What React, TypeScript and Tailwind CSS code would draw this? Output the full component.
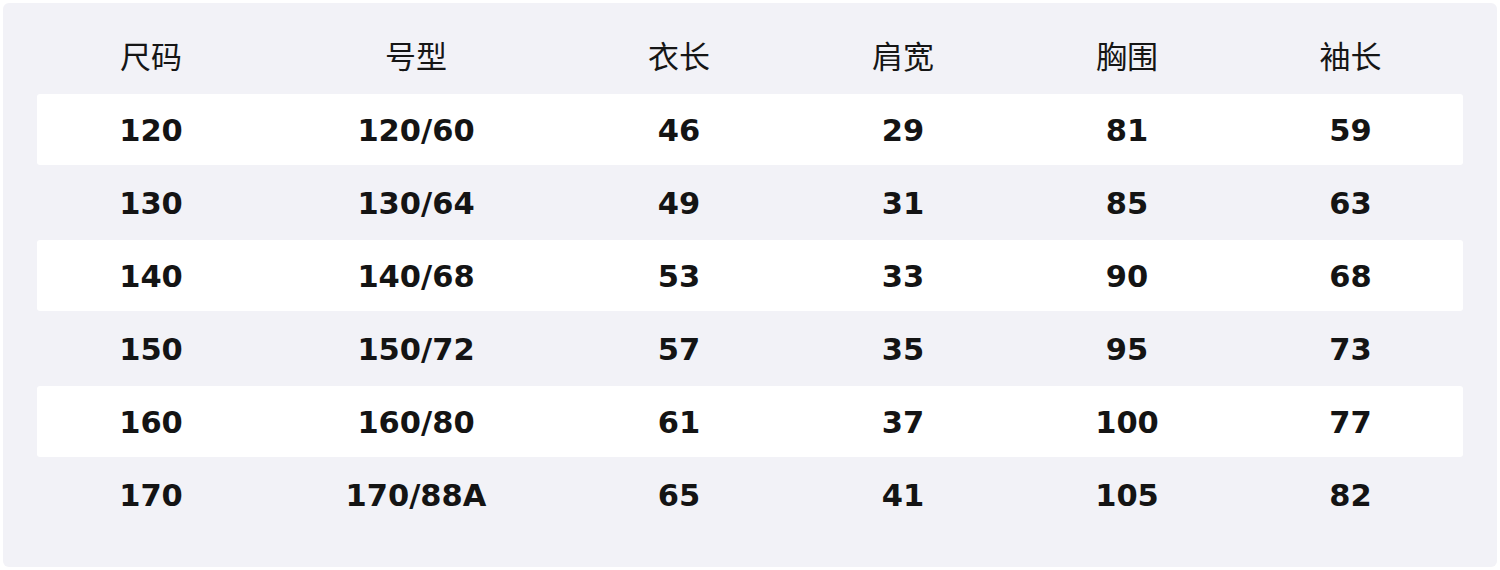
const headers = ['尺码', '号型', '衣长', '肩宽', '胸围', '袖长'];

const rows = [
  ['120', '120/60', '46', '29', '81', '59'],
  ['130', '130/64', '49', '31', '85', '63'],
  ['140', '140/68', '53', '33', '90', '68'],
  ['150', '150/72', '57', '35', '95', '73'],
  ['160', '160/80', '61', '37', '100', '77'],
  ['170', '170/88A', '65', '41', '105', '82'],
];

const cols = 'grid grid-cols-[228px_302px_224px_224px_224px_223px]';

export default function App() {
  return (
    <div className="w-[1500px] h-[570px] bg-white p-[3px]">
      <div className="h-[564px] rounded-md bg-[#f2f2f7] px-[34px] pt-[18px]">
        <div className="flex flex-col gap-[2px]">
          <div className={`${cols} h-[71px] items-center pb-[4px]`}>
            {headers.map((h) => (
              <div
                key={h}
                className="text-center text-[31px] leading-none text-[#161616] font-['Noto_Sans_CJK_SC',sans-serif]"
              >
                {h}
              </div>
            ))}
          </div>
          {rows.map((r, i) => (
            <div
              key={r[0]}
              className={`${cols} h-[71px] items-center rounded-[3px] pt-[4px] ${i % 2 === 0 ? 'bg-white' : ''}`}
            >
              {r.map((c, j) => (
                <div
                  key={j}
                  className="text-center text-[30.5px] leading-none font-bold text-[#141414] font-['DejaVu_Sans',sans-serif]"
                >
                  {c}
                </div>
              ))}
            </div>
          ))}
        </div>
      </div>
    </div>
  );
}
